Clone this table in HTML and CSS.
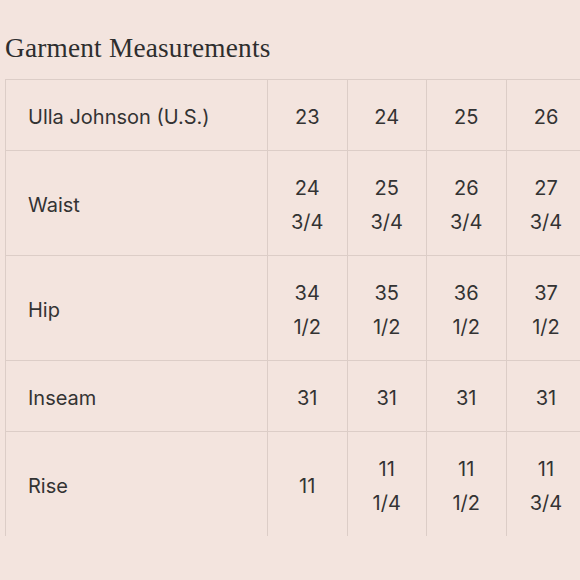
FILE: index.html
```html
<!DOCTYPE html>
<html>
<head>
<meta charset="utf-8">
<link rel="stylesheet" href="styles.css">
</head>
<body>
<div class="page">
  <h2 class="title">Garment Measurements</h2>
  <table class="chart">
    <tr>
      <th class="label">Ulla Johnson (U.S.)</th>
      <td>23</td><td>24</td><td>25</td><td>26</td>
    </tr>
    <tr class="tall">
      <th class="label">Waist</th>
      <td>24<br>3/4</td><td>25<br>3/4</td><td>26<br>3/4</td><td>27<br>3/4</td>
    </tr>
    <tr class="tall">
      <th class="label">Hip</th>
      <td>34<br>1/2</td><td>35<br>1/2</td><td>36<br>1/2</td><td>37<br>1/2</td>
    </tr>
    <tr>
      <th class="label">Inseam</th>
      <td>31</td><td>31</td><td>31</td><td>31</td>
    </tr>
    <tr class="tall last">
      <th class="label">Rise</th>
      <td>11</td><td>11<br>1/4</td><td>11<br>1/2</td><td>11<br>3/4</td>
    </tr>
  </table>
</div>
</body>
</html>
```

FILE: styles.css
```css
html, body {
  margin: 0;
  padding: 0;
  background: #f3e4de;
  overflow: hidden;
}
.page {
  width: 580px;
  height: 580px;
  overflow: hidden;
  padding: 0 0 0 5px;
  box-sizing: border-box;
}
.title {
  margin: 0;
  padding-top: 33px;
  font-family: "Liberation Serif", serif;
  font-weight: normal;
  font-size: 27.3px;
  line-height: 30px;
  color: #2e2e2e;
  letter-spacing: 0.2px;
}
.chart {
  margin-top: 16px;
  border-collapse: collapse;
  table-layout: fixed;
  width: 578px;
  font-family: "Inter", sans-serif;
  font-size: 20px;
  color: #333;
}
.chart th, .chart td {
  border-top: 1px solid #dccdc7;
  border-left: 1px solid #dccdc7;
  line-height: 34px;
  padding: 20px 0 16px 0;
  font-weight: normal;
  text-align: center;
  vertical-align: middle;
}
.chart .label {
  width: 240px;
  text-align: left;
  padding-left: 22px;
}
.chart td {
  width: 79px;
}
.chart td:nth-child(2),
.chart td:nth-child(3),
.chart td:nth-child(4) {
  width: 78.5px;
}
.chart .label {
  width: 239px;
}
```
